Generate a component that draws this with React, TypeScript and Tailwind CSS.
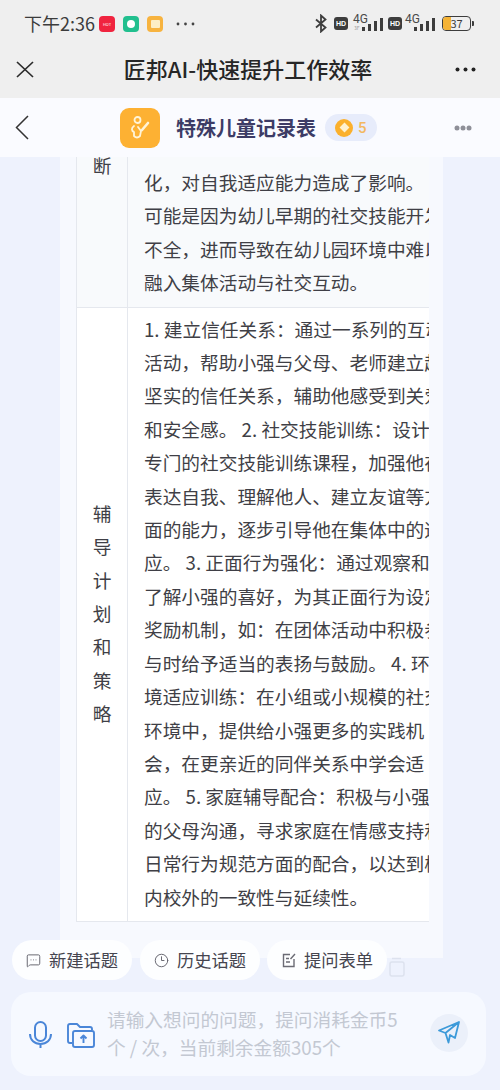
import { PropsWithChildren, ReactNode } from 'react'
import { Clock3, MessageSquareMore } from 'lucide-react'

const rowOne = [
  '化，对自我适应能力造成了影响。',
  '可能是因为幼儿早期的社交技能开发',
  '不全，进而导致在幼儿园环境中难以',
  '融入集体活动与社交互动。'
]

const rowTwo = [
  '1. 建立信任关系：通过一系列的互动',
  '活动，帮助小强与父母、老师建立起',
  '坚实的信任关系，辅助他感受到关爱',
  '和安全感。 2. 社交技能训练：设计',
  '专门的社交技能训练课程，加强他在',
  '表达自我、理解他人、建立友谊等方',
  '面的能力，逐步引导他在集体中的适',
  '应。 3. 正面行为强化：通过观察和',
  '了解小强的喜好，为其正面行为设定',
  '奖励机制，如：在团体活动中积极参',
  '与时给予适当的表扬与鼓励。 4. 环',
  '境适应训练：在小组或小规模的社交',
  '环境中，提供给小强更多的实践机',
  '会，在更亲近的同伴关系中学会适',
  '应。 5. 家庭辅导配合：积极与小强',
  '的父母沟通，寻求家庭在情感支持和',
  '日常行为规范方面的配合，以达到校',
  '内校外的一致性与延续性。'
]

const Signal = ({ small }: { small?: boolean }) => (
  <div className="relative w-[30px] h-[18px]">
    <span className="absolute left-0 top-[-1px] text-[12px] leading-[11px] text-[#4a4a4a] font-['Roboto',sans-serif]">4G</span>
    {small ? <span className="absolute left-[1px] top-[10px] text-[5px] leading-[6px] text-[#999]">3F</span> : null}
    <svg className="absolute left-[9px] top-0" width="21" height="18" viewBox="0 0 21 18" fill="#3d3d3d">
      <rect x="0" y="12" width="3" height="4" />
      <rect x="6" y="9" width="3" height="7" />
      <rect x="12" y="6" width="3" height="10" />
      <rect x="18" y="3" width="3" height="13" />
    </svg>
  </div>
)

const Hd = () => (
  <span className="w-[14px] h-[13px] rounded-[3px] bg-[#3d3d3d] text-white text-[7px] font-bold leading-[13px] text-center font-['Liberation_Sans',sans-serif]">
    HD
  </span>
)

const StatusBar = () => (
  <div className="h-[50px] pb-[3px] pl-[24px] pr-[26px] flex items-center justify-between">
    <div className="flex items-center">
      <span className="mt-[-1px] w-[72px] text-[18px] leading-[24px] text-[#3c3c3c] whitespace-nowrap">下午2:36</span>
      <span className="ml-[3px] w-[16px] h-[16px] rounded-[4px] bg-[#f0243f] text-white text-[4px] leading-[16px] text-center">HOT</span>
      <span className="ml-[8px] w-[16px] h-[16px] rounded-[4px] bg-[#21bf8e] flex items-center justify-center">
        <span className="w-[8px] h-[8px] rounded-full bg-white" />
      </span>
      <span className="ml-[8px] w-[16px] h-[16px] rounded-[4px] bg-[#f7b33f] flex items-center justify-center">
        <span className="w-[9px] h-[8px] rounded-[1px] bg-[#fdeec4]" />
      </span>
      <svg className="ml-[13px]" width="19" height="4" viewBox="0 0 19 4" fill="#444">
        <circle cx="2" cy="2" r="1.4" />
        <circle cx="9.5" cy="2" r="1.4" />
        <circle cx="17" cy="2" r="1.4" />
      </svg>
    </div>
    <div className="flex items-center">
      <svg width="12" height="19" viewBox="0 0 12 19" fill="none" stroke="#3d3d3d" strokeWidth="1.8">
        <path d="M1 5.5 L10.5 13.5 L6 17.5 V1.5 L10.5 5.5 L1 13.5" />
      </svg>
      <span className="ml-[7px] flex">
        <Hd />
      </span>
      <span className="ml-[5px] flex">
        <Signal small />
      </span>
      <span className="ml-[5px] flex">
        <Hd />
      </span>
      <span className="ml-[3px] flex">
        <Signal />
      </span>
      <div className="ml-[7px] flex items-center">
        <div className="relative w-[29px] h-[15px] rounded-[4px] border-[1.5px] border-[#3d3d3d] overflow-hidden">
          <div className="absolute left-0 top-0 bottom-0 w-[8px] bg-[#f5b335]" />
          <span className="absolute inset-0 text-[11px] leading-[12px] text-center text-[#3d3d3d]">37</span>
        </div>
        <span className="ml-[1px] w-[2px] h-[5px] rounded-r-[1px] bg-[#3d3d3d]" />
      </div>
    </div>
  </div>
)

const TitleBar = () => (
  <div className="h-[48px] pb-[9px] pl-[16px] pr-[24px] flex items-center justify-between">
    <svg width="18" height="17" viewBox="0 0 18 17" fill="none" stroke="#2b2b2b" strokeWidth="1.7">
      <path d="M1 1 L17 16 M17 1 L1 16" />
    </svg>
    <span className="ml-[7px] mt-[-3px] text-[22px] leading-[28px] font-medium text-[#262626] whitespace-nowrap">匠邦AI-快速提升工作效率</span>
    <svg width="21" height="5" viewBox="0 0 21 5" fill="#222">
      <circle cx="2.5" cy="2.5" r="2" />
      <circle cx="10.5" cy="2.5" r="2" />
      <circle cx="18.5" cy="2.5" r="2" />
    </svg>
  </div>
)

const NavBar = () => (
  <div className="relative z-10 h-[59px] pl-[15px] pr-[28px] flex items-center bg-[#fafbff]">
    <svg className="mt-[-1px]" width="14" height="25" viewBox="0 0 14 25" fill="none" stroke="#333" strokeWidth="1.5">
      <path d="M13 1 L1.5 12.5 L13 24" />
    </svg>
    <div className="ml-[91px] w-[40px] h-[40px] rounded-[9px] bg-[#fdb133] flex items-center justify-center">
      <svg width="20" height="24" viewBox="0 0 20 24" fill="none" stroke="#fff4d8" strokeWidth="1.8" strokeLinecap="round" strokeLinejoin="round">
        <circle cx="7.5" cy="4" r="3" />
        <path d="M4 10 C1 12 1.5 15 4 16 V20 Q7 23 10 20 L11 15 L8 11" />
        <path d="M12 14 L18 7" strokeWidth="2.6" />
      </svg>
    </div>
    <span className="ml-[16px] text-[20px] leading-[28px] font-bold text-[#3d3c66] whitespace-nowrap">特殊儿童记录表</span>
    <div className="ml-[9px] w-[52px] h-[27px] rounded-full bg-[#e7ecfb] flex items-center pl-[10px]">
      <span className="w-[18px] h-[18px] rounded-full bg-[#fbb02c] flex items-center justify-center">
        <span className="w-[7px] h-[7px] rotate-45 bg-[#fff1cf]" />
      </span>
      <span className="ml-[5px] text-[15px] leading-[20px] font-medium text-[#f3b860] font-['Roboto',sans-serif]">5</span>
    </div>
    <svg className="ml-auto" width="18" height="6" viewBox="0 0 18 6" fill="#8e8f98">
      <circle cx="3" cy="3" r="2.5" />
      <circle cx="9" cy="3" r="2.5" />
      <circle cx="15" cy="3" r="2.5" />
    </svg>
  </div>
)

const Lines = ({ lines }: { lines: string[] }) => (
  <div className="text-[18.7px] leading-[33.4px] text-[#3f3f46] whitespace-nowrap">
    {lines.map((line) => (
      <div key={line}>{line}</div>
    ))}
  </div>
)

const Row = ({ label, className, children }: PropsWithChildren<{ label: ReactNode; className?: string }>) => (
  <div className={`flex border-b border-[#e5e8ee] ${className ?? ''}`}>
    <div className="w-[52px] shrink-0 border-x border-[#e5e8ee] text-[18.7px] text-center text-[#3f3f46]">{label}</div>
    {children}
  </div>
)

const RecordTable = () => (
  <div className="ml-[16px] w-[353px] overflow-hidden">
    <Row className="bg-[#f8fafc]" label={<div className="mt-[-2px] leading-[20px]">断</div>}>
      <div className="pl-[16px] pt-[8px] pb-[8px]">
        <Lines lines={rowOne} />
      </div>
    </Row>
    <Row
      className="bg-white"
      label={
        <div className="h-full pb-[3px] flex flex-col justify-center leading-[33.4px]">
          {'辅导计划和策略'.split('').map((ch) => (
            <div key={ch}>{ch}</div>
          ))}
        </div>
      }
    >
      <div className="pl-[16px] pt-[4px] pb-[8px]">
        <Lines lines={rowTwo} />
      </div>
    </Row>
  </div>
)

const Chip = ({ icon, label, className }: { icon: ReactNode; label: string; className: string }) => (
  <div className={`h-[40px] rounded-[20px] bg-[#fdfeff] flex items-center ${className}`}>
    {icon}
    <span className="ml-[8px] text-[17.3px] leading-[24px] text-[#45454f] whitespace-nowrap">{label}</span>
  </div>
)

const Footer = () => (
  <div className="absolute z-10 left-0 right-0 bottom-[14px] px-[11px]">
    <div className="pl-[1px] flex">
      <Chip
        className="w-[120px] pl-[14px]"
        label="新建话题"
        icon={<MessageSquareMore size={15} strokeWidth={1.5} className="text-[#60606a]" />}
      />
      <Chip
        className="ml-[8px] w-[120px] pl-[14px]"
        label="历史话题"
        icon={<Clock3 size={15} strokeWidth={1.5} className="text-[#60606a]" />}
      />
      <Chip
        className="ml-[7px] w-[120px] pl-[15px]"
        label="提问表单"
        icon={
          <svg width="14" height="15" viewBox="0 0 14 15" fill="none" stroke="#6b6b74" strokeWidth="1.4">
            <path d="M8 1.5 H1.5 V13.5 H12 V6 M4 5.5 H7 M4 9 H8 M13 1 L8.5 6" />
          </svg>
        }
      />
      <svg className="ml-[1px] mt-[17px]" width="17" height="20" viewBox="0 0 17 20" fill="none" stroke="#dde2ee" strokeWidth="1.5">
        <path d="M4 1.5 H13" />
        <rect x="2" y="5" width="14" height="14" rx="2" />
      </svg>
    </div>
    <div className="mt-[12px] w-[475px] h-[84px] rounded-[20px] bg-[#f6f9ff] flex items-center pl-[18px]">
      <svg width="23" height="28" viewBox="0 0 23 28" fill="none" stroke="#4a86d8" strokeWidth="2" className="mt-[1px]">
        <rect x="6" y="1" width="11" height="19" rx="5.5" />
        <path d="M1 13 C1 19 5.5 23 11.5 23 C17.5 23 22 19 22 13 M11.5 23 V27" />
      </svg>
      <svg className="ml-[15px] mt-[2px]" width="28" height="25" viewBox="0 0 28 25" fill="none" stroke="#4a86d8" strokeWidth="1.9" strokeLinejoin="round">
        <path d="M5 20 H3 Q1 20 1 18 V3 Q1 1 3 1 H10 L13 4 H23 Q25 4 25 6 V7" />
        <rect x="6" y="8" width="21" height="16" rx="2" />
        <path d="M16.5 20 V13 M13.5 15.5 L16.5 12.5 L19.5 15.5" />
      </svg>
      <div className="ml-[12px] mb-[3px] w-[300px] text-[18.7px] leading-[27.5px] text-[#c3c8d2]">
        <div className="whitespace-nowrap">请输入想问的问题，提问消耗金币5</div>
        <div className="whitespace-nowrap">个 / 次，当前剩余金额305个</div>
      </div>
      <div className="ml-auto mr-[18px] mb-[3px] w-[38px] h-[38px] rounded-full bg-[#ebf0fa] flex items-center justify-center">
        <svg width="22" height="23" viewBox="0 0 22 23" fill="none" stroke="#3d9ad9" strokeWidth="1.8" strokeLinejoin="round">
          <path d="M1 9.5 L21 1 L17 17 L12 14 L10.5 21.5 L7.5 12 Z M21 1 L7.5 12" />
        </svg>
      </div>
    </div>
  </div>
)

export default function App() {
  return (
    <div className="relative w-[500px] h-[1090px] overflow-hidden bg-[#eef2fd] font-['Noto_Sans_CJK_SC','Noto_Sans',sans-serif]">
      <div className="bg-[#efefef]">
        <StatusBar />
        <TitleBar />
      </div>
      <NavBar />
      <div className="ml-[60px] w-[383px] h-[801px] bg-[#f7f9fe]">
        <RecordTable />
      </div>
      <Footer />
    </div>
  )
}
